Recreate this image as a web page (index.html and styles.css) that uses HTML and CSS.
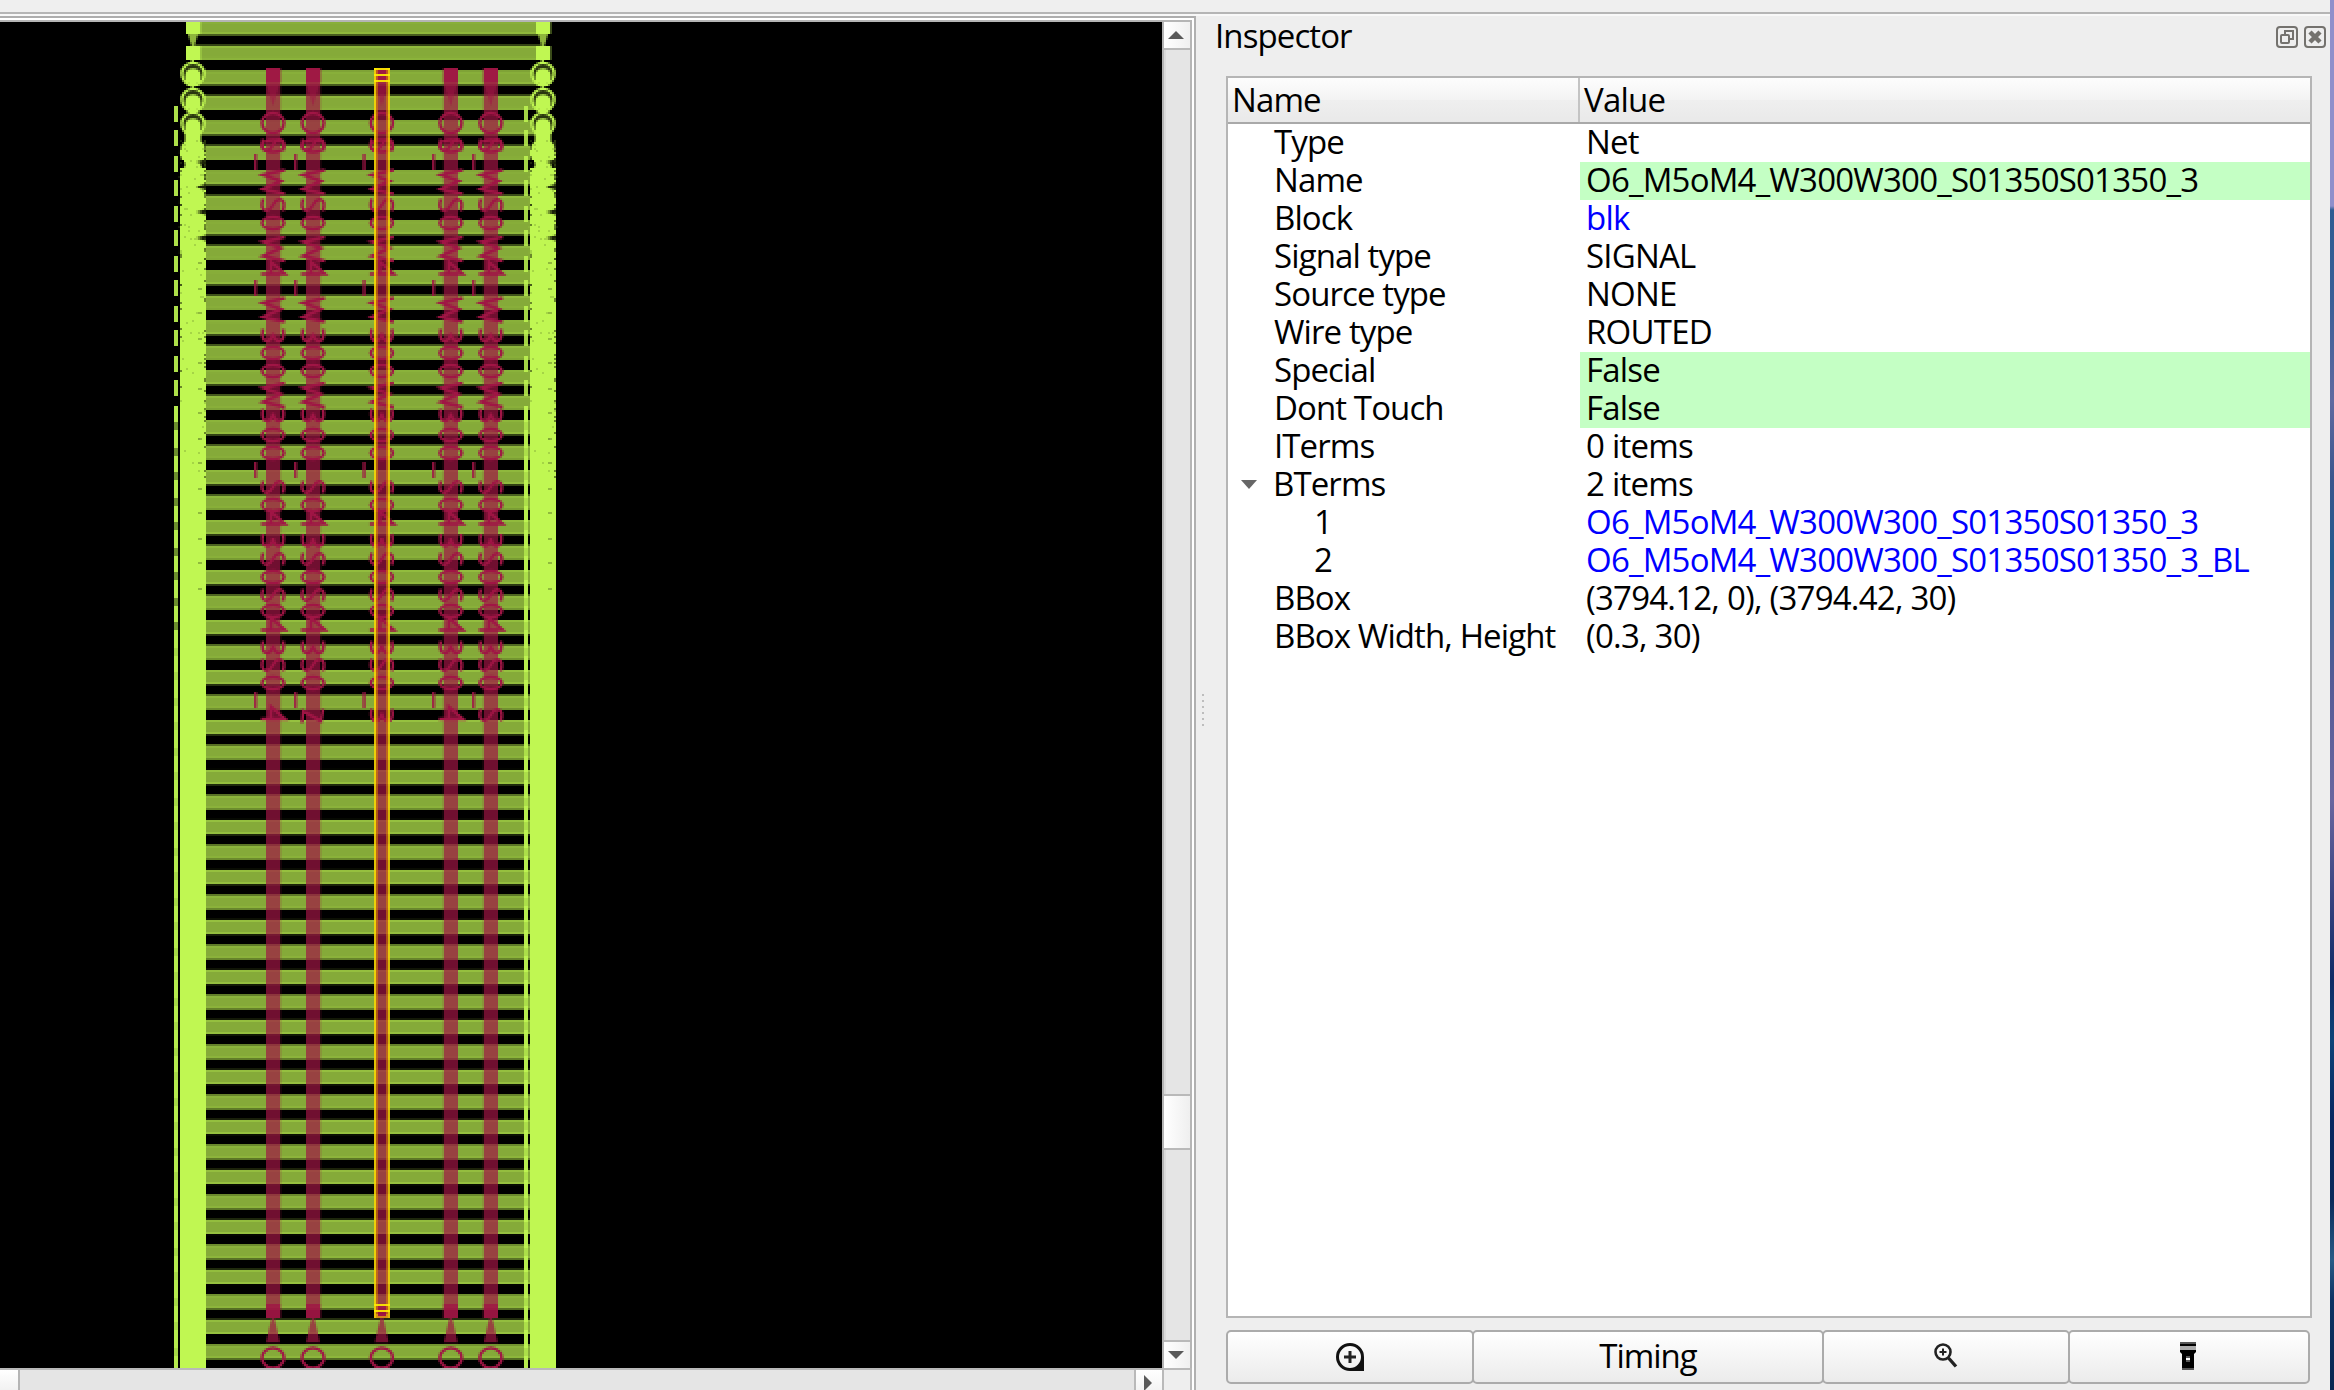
FILE: index.html
```html
<!DOCTYPE html>
<html lang="en">
<head>
<meta charset="utf-8">
<title>Layout viewer - Inspector</title>
<link rel="stylesheet" href="styles.css">
</head>
<body>
<div class="window">
  <div class="toolbar-edge"></div>
  <div class="main">
    <section class="viewer">
      <div class="viewer-frame">
        <canvas class="layout" id="layout" width="581" height="673"></canvas>
        <div class="vscroll">
          <div class="sb-btn"><svg width="16" height="8" viewBox="0 0 16 8"><path d="M0 8 8 0 16 8z" fill="#5a5a5a"/></svg></div>
          <div class="sb-track track-a"></div>
          <div class="sb-thumb"></div>
          <div class="sb-track track-b"></div>
          <div class="sb-btn down"><svg width="16" height="8" viewBox="0 0 16 8"><path d="M0 0 8 8 16 0z" fill="#5a5a5a"/></svg></div>
        </div>
        <div class="hscroll">
          <div class="h-thumb"></div>
          <div class="h-track"></div>
          <div class="h-btn"><svg width="8" height="16" viewBox="0 0 8 16"><path d="M0 0 8 8 0 16z" fill="#5a5a5a"/></svg></div>
        </div>
        <div class="corner"></div>
      </div>
    </section>
    <div class="splitter"><i></i><i></i><i></i><i></i><i></i><i></i></div>
    <section class="inspector">
      <header class="dock-title">
        <span class="t">Inspector</span>
        <span class="dock-buttons">
          <svg width="22" height="22" viewBox="0 0 22 22" fill="none" stroke="#74726e" stroke-width="2"><rect x="1" y="1" width="20" height="20" rx="3"/><rect x="5" y="9" width="8" height="8" rx="1"/><path d="M9 8V5h8v8h-3"/></svg>
          <svg width="22" height="22" viewBox="0 0 22 22" fill="none" stroke="#74726e" stroke-width="2"><rect x="1" y="1" width="20" height="20" rx="3"/><path d="M6 6 16 16M16 6 6 16" stroke-width="4.5"/></svg>
        </span>
      </header>
      <div class="tree">
        <div class="row head"><div class="c1"><span class="t">Name</span></div><div class="c2"><span class="t">Value</span></div></div>
        <div class="row"><div class="c1"><span class="t">Type</span></div><div class="c2"><span class="t">Net</span></div></div>
        <div class="row edit"><div class="c1"><span class="t">Name</span></div><div class="c2"><span class="t">O6_M5oM4_W300W300_S01350S01350_3</span></div></div>
        <div class="row link"><div class="c1"><span class="t">Block</span></div><div class="c2"><span class="t">blk</span></div></div>
        <div class="row"><div class="c1"><span class="t">Signal type</span></div><div class="c2"><span class="t">SIGNAL</span></div></div>
        <div class="row"><div class="c1"><span class="t">Source type</span></div><div class="c2"><span class="t">NONE</span></div></div>
        <div class="row"><div class="c1"><span class="t">Wire type</span></div><div class="c2"><span class="t">ROUTED</span></div></div>
        <div class="row edit"><div class="c1"><span class="t">Special</span></div><div class="c2"><span class="t">False</span></div></div>
        <div class="row edit"><div class="c1"><span class="t">Dont Touch</span></div><div class="c2"><span class="t">False</span></div></div>
        <div class="row"><div class="c1"><span class="t">ITerms</span></div><div class="c2"><span class="t">0 items</span></div></div>
        <div class="row open"><div class="c1"><svg class="caret" width="16" height="9" viewBox="0 0 16 9"><path d="M0 0h16L8 9z" fill="#666"/></svg><span class="t">BTerms</span></div><div class="c2"><span class="t">2 items</span></div></div>
        <div class="row link child"><div class="c1"><span class="t">1</span></div><div class="c2"><span class="t">O6_M5oM4_W300W300_S01350S01350_3</span></div></div>
        <div class="row link child"><div class="c1"><span class="t">2</span></div><div class="c2"><span class="t">O6_M5oM4_W300W300_S01350S01350_3_BL</span></div></div>
        <div class="row"><div class="c1"><span class="t">BBox</span></div><div class="c2"><span class="t">(3794.12, 0), (3794.42, 30)</span></div></div>
        <div class="row"><div class="c1"><span class="t">BBox Width, Height</span></div><div class="c2"><span class="t">(0.3, 30)</span></div></div>
      </div>
      <div class="actions">
        <button class="b1"><svg width="28" height="28" viewBox="0 0 28 28"><path d="M14 0a14 14 0 0 0 0 28h14V14A14 14 0 0 0 14 0zm0 3a11 11 0 1 1 0 22 11 11 0 0 1 0-22z" fill="#111" fill-rule="evenodd"/><path d="M14 8v12M8 14h12" stroke="#222" stroke-width="3"/></svg></button>
        <button class="b2"><span class="t">Timing</span></button>
        <button class="b3"><svg width="24" height="26" viewBox="0 0 24 26" fill="none" stroke="#222"><circle cx="9" cy="9" r="7.5" stroke-width="2.6"/><path d="M9 5.5v7M5.5 9h7" stroke-width="2"/><path d="M14.5 15 22 23.5" stroke-width="3.4"/></svg></button>
        <button class="b4"><svg width="16" height="28" viewBox="0 0 16 28"><path d="M0 0h16v2H0z" fill="#555"/><path d="M0 2h16v2H0z"/><path d="M0 4h16v4H0z" fill="#aaa"/><path d="M0 8h16v2l-2 2v14H2V12L0 10z"/><path d="M2 26h12v2H2z" fill="#555"/><path d="M6 14h4v6H6z" fill="#555"/><path d="M6 16h4v2H6z" fill="#fff"/></svg></button>
      </div>
    </section>
    <div class="desktop"></div>
  </div>
</div>
<script src="layout.js"></script>
</body>
</html>
```
FILE: styles.css
```css
* { box-sizing: border-box; }
body {
  margin: 0;
  width: 2334px;
  height: 1390px;
  overflow: hidden;
  background: #eeeeee;
  color: #000;
  font: 33px/38px "Open Sans", "Noto Sans", sans-serif;
  letter-spacing: -0.78px;
}
.window { position: relative; height: 1390px; display: flex; flex-direction: column; overflow: hidden; }
.toolbar-edge { height: 16px; margin-right: 4px; background: #efefef; border-bottom: 2px solid #f8f8f8; box-shadow: inset 0 -2px 0 #b5b5b5; flex: none; }
.main { flex: 1; display: flex; min-height: 0; }

.viewer { width: 1196px; padding: 2px 2px 0 0; background: #fff; border-top: 2px solid #adadad; border-right: 2px solid #b0b0b0; }
.viewer-frame {
  height: 1370px;
  display: grid;
  grid-template: 1346px 22px / 1162px 30px;
  border-top: 2px solid #b5b5b5;
}
.layout { display: block; width: 1162px; height: 1346px; background: #000; image-rendering: pixelated; }
.vscroll { display: flex; flex-direction: column; border-left: 2px solid #b5b5b5; border-right: 2px solid #b5b5b5; }
.sb-btn { height: 28px; display: flex; align-items: center; justify-content: center; padding-right: 2px; background: linear-gradient(90deg, #fff, #f0f0f0); border-bottom: 2px solid #b9b9b9; flex: none; }
.sb-btn.down { border-bottom: 0; border-top: 2px solid #b9b9b9; }
.sb-track { background: #e5e5e5; border-left: 2px solid #dadada; }
.track-a { height: 1044px; }
.sb-thumb { height: 56px; background: linear-gradient(90deg, #fff, #efefef); border: solid #b9b9b9; border-width: 2px 0; }
.track-b { flex: 1; }
.hscroll { display: flex; border-top: 2px solid #b9b9b9; }
.h-thumb { width: 20px; background: linear-gradient(#fff, #f2f2f2); border-right: 2px solid #b5b5b5; }
.h-track { flex: 1; background: #e5e5e5; }
.h-btn { width: 28px; height: 20px; overflow: hidden; display: flex; justify-content: center; padding: 5px 2px 0 0; background: linear-gradient(#fff, #f4f4f4); border-left: 2px solid #b9b9b9; }
.h-btn svg { flex: none; }
.corner { border: solid #b9b9b9; border-width: 2px 2px 0; background: #eee; }

.splitter { width: 30px; padding: 678px 12px 0 6px; display: flex; flex-direction: column; gap: 4px; }
.splitter i { width: 2px; height: 2px; background: #bdbdbd; }

.inspector { width: 1104px; display: flex; flex-direction: column; }
.dock-title { height: 60px; margin-left: -11px; padding: 1px 4px 0 0; display: flex; justify-content: space-between; letter-spacing: -0.9px; }
.dock-buttons { display: flex; gap: 6px; padding-top: 9px; }
.tree { width: 1086px; height: 1242px; background: #fff; border: 2px solid #b5b5b5; }
.row { display: flex; height: 38px; line-height: 36px; white-space: nowrap; }
.c1 { width: 352px; padding-left: 46px; display: flex; letter-spacing: -0.9px; }
.c2 { flex: 1; padding-left: 6px; }
.edit .c2 { background: #c4ffc4; }
.link .c2 { color: #0000ff; }
.child .c1 { padding-left: 86px; }
.caret { margin: 14px 16px 0 -30px; }
.open .c1 { padding-left: 43px; }
.head { height: 46px; line-height: 43px; background: linear-gradient(#fdfdfd, #f3f3f3 50%, #efefef 50%, #e9e9e9); border-bottom: 2px solid #a9a9a9; }
.head .c1 { padding-left: 4px; border-right: 2px solid #c4c4c4; }
.head .c2 { padding-left: 4px; }

.actions { display: flex; width: 1086px; margin-top: 12px; height: 54px; }
button { font: inherit; letter-spacing: -1px; color: #000; padding: 0; display: flex; align-items: center; justify-content: center; background: linear-gradient(#fff, #ebebeb); border: 2px solid #ababab; border-radius: 5px; margin-right: -2px; }
.b1 { width: 248px; }
.b2 { width: 352px; padding-bottom: 2px; }
.b3 { width: 248px; padding-bottom: 2px; }
.b4 { width: 242px; padding-right: 3px; padding-bottom: 2px; }
.desktop { width: 4px; margin-top: -16px; background: linear-gradient(#8f8fcb 0 206px, #2d5c92 210px, #3a5f97 300px, #6069a0 400px, #3a568d 480px, #225b8f 560px, #555b96 680px, #69669f 800px, #37427f 900px, #0f2c66 980px, #0d4378 1040px, #082660 1120px, #0a2a5a 1200px, #275b86 1260px, #0c3263 1300px, #0a2550); }
```
FILE: layout.js
```js
const cv = document.getElementById('layout');
const g = cv.getContext('2d');
g.translate(0, -11);
const LIME = '#c0f752', RED = '#a01545';
const R = (c, x, y, w, h, a = 1) => { g.globalAlpha = a; g.fillStyle = c; g.fillRect(x, y, w, h); g.globalAlpha = 1; };

// horizontal rails
for (let n = -2; n < 52; n++) {
  const t = 35.2 + 12.492 * n, x = n < 3 ? 97 : 100, w = 265 - x + (n < 3 ? 6 : 0);
  R(LIME, x, t, w, 7.2, 0.69);
  R(LIME, x, t, w, 1, 0.3);
  R(LIME, x, t + 6.2, w, 1, 0.3);
}

// side pillars
function pillar(x0) {
  const cx = x0 + 6.5;
  R(LIME, x0 + 3, 11, 7, 6); R(LIME, x0 + 10, 11, 1, 6, 0.3);
  R(LIME, x0 + 3, 23, 7, 7); R(LIME, x0 + 10, 23, 1, 7, 0.3);
  g.fillStyle = '#8fb63c';
  g.beginPath(); g.moveTo(x0 + 4, 17); g.lineTo(x0 + 9, 17); g.lineTo(x0 + 7.2, 23); g.lineTo(x0 + 5.8, 23); g.fill();
  R(LIME, cx - 1, 30, 1.5, 45, 0.8);
  for (const y of [37, 50, 62]) {
    g.strokeStyle = LIME; g.fillStyle = '#2a360f'; g.lineWidth = 1.4;
    g.beginPath(); g.arc(cx, y, 5.6, 0, 7); g.fill(); g.stroke();
    g.fillStyle = LIME;
    g.beginPath(); g.ellipse(cx, y + 1.2, 3.9, 4, 0, 0, 7); g.fill();
    R(LIME, x0 + 3, y + 1, 7, 3);
  }
  g.fillStyle = LIME;
  for (let y = 76; y < 130; y += 12.5) { g.beginPath(); g.arc(cx, y, 6.6, 0, 7); g.fill(); }
  R(LIME, x0, 74, 13, 7); R(LIME, x0 + 2.5, 66, 8, 20);
  R(LIME, x0, 84, 13, 600);
  for (const y of [81, 93.5, 106, 119]) {
    g.fillStyle = '#1a2208';
    g.beginPath(); g.moveTo(x0 + 13, y - 1.5); g.lineTo(x0 + 8, y); g.lineTo(x0 + 13, y + 1.5); g.fill();
  }
  R('#000', x0, 80, 2, 2);
  let s = 7;
  const rnd = () => (s = (s * 16807) % 2147483647) / 2147483647;
  for (let i = 0; i < 150; i++) {
    const y = 70 + Math.floor(rnd() * rnd() * 210), e = rnd();
    R('#2e3d10', e < 0.5 ? x0 + 12 : e < 0.65 ? x0 : x0 + Math.floor(rnd() * 13), y, 1, 1, e < 0.65 ? 0.6 : 0.18);
  }
  for (let y = 131; y < 300; y += 12.5) R('#5f7d28', x0 + 9, Math.round(y), 2, 1, 0.5);
}
pillar(90); pillar(265);

for (const [x, a] of [[87, 0.9], [262, 0.85]]) {
  for (let y = 53; y < 203; y += 12.5) R(LIME, x, Math.round(y - 0.2), 2, 8, a);
  R(LIME, x, 203, 2, 481, 0.95);
  for (let y = 211; y < 684; y += 12.5) R('#22300c', x, Math.round(y), 2, 4, y < 320 && x < 100 ? 0.5 : 0.1);
}

// vertical wires with their squashed labels
const glyph = {
  O: (x, y) => { g.ellipse(x, y, 5.5, 3, 0, 0, 7); },
  C: (x, y) => { g.ellipse(x, y, 5.5, 5, 0, 0, 7); },
  Z: (x, y) => { g.moveTo(x + 6, y - 6); g.lineTo(x - 5, y - 3.5); g.lineTo(x + 4, y - 0.5); g.lineTo(x - 5, y + 3.5); g.lineTo(x + 6, y + 6); },
  S: (x, y) => { g.moveTo(x - 5, y - 3); g.bezierCurveTo(x - 7, y + 4, x - 2, y + 4, x, y); g.bezierCurveTo(x + 2, y - 4, x + 7, y - 4, x + 5, y + 3); },
  W: (x, y) => { g.moveTo(x - 5, y - 3); g.bezierCurveTo(x - 7, y + 5, x, y + 4, x, y - 1); g.bezierCurveTo(x, y + 4, x + 7, y + 5, x + 5, y - 3); },
  A: (x, y) => { g.moveTo(x - 6, y + 2); g.lineTo(x + 6, y + 2); g.lineTo(x - 1, y - 4); g.lineTo(x - 1, y + 2); },
  N: (x, y) => { g.moveTo(x - 5.5, y + 4); g.lineTo(x - 5, y - 2); g.lineTo(x + 4, y + 3); g.lineTo(x + 5, y - 3); },
};
const marks = [[61.5, 'C'], [72.5, 'S'], [73, 'O'], [91, 'Z'], [102.5, 'S'], [111.5, 'O'], [124.5, 'Z'], [135, 'A'], [155, 'Z'],
  [167.5, 'W'], [176.5, 'O'], [185.5, 'O'], [197.5, 'Z'], [207.5, 'W'], [217.5, 'O'], [226.5, 'O'], [243.5, 'S'], [252.5, 'O'],
  [260, 'A'], [270, 'W'], [279.5, 'S'], [288.5, 'O'], [297.5, 'S'], [305.5, 'O'], [313, 'A'], [323.5, 'W'], [332.5, 'S'], [341.5, 'O']];
const last = ['A', 'N', 'W', 'A', 'S'];
[[133, 136.5], [153, 156.5], [187.4, 190.9], [221.8, 225.4], [241.8, 245.4]].forEach(([x, cx], i) => {
  R(RED, x, 34, 7.2, 625, 0.7);
  R(RED, x, 34, 7.2, 7, 0.9);
  R(RED, x, 652, 7.2, 7, 0.8);
  g.fillStyle = RED; g.globalAlpha = 0.55;
  g.beginPath(); g.moveTo(x, 41); g.lineTo(x + 7, 41); g.lineTo(cx, 53); g.fill();
  g.globalAlpha = 0.7;
  g.beginPath(); g.moveTo(cx - 0.7, 659); g.lineTo(cx + 0.7, 659); g.lineTo(cx + 3.5, 671.3); g.lineTo(cx - 3.5, 671.3); g.fill();
  g.globalAlpha = 1;
  g.strokeStyle = RED; g.lineWidth = 1.5;
  for (const [y, k] of [...marks, [357.5, last[i]], [679, 'C']]) { g.beginPath(); glyph[k](cx, y); g.stroke(); }
  for (const y of [77, 140, 231, 346]) R(RED, [127, 147, 181.3, 216, 236][i], y, 1.5, 8, 0.85);
});

// selected net highlight
R('#ffe600', 187, 34, 1, 625, 0.83); R('#ffe600', 194, 34, 1, 625, 0.78);
R('#e08a00', 188, 34, 1, 625, 0.55); R('#e08a00', 193, 34, 1, 625, 0.55);
for (const y of [34, 37, 40, 652, 655]) R('#ffee00', 187, y, 8, 1, 0.9);
R('#e0a010', 188, 657, 6, 2, 0.8);
R(RED, 189, 657, 4, 1);
```
